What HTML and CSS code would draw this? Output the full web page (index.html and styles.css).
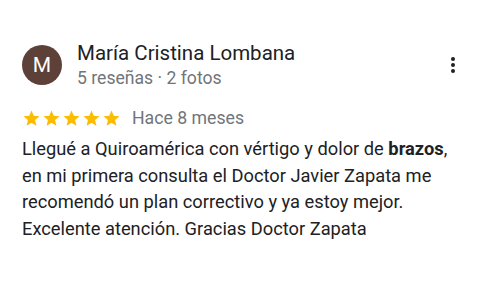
FILE: index.html
```html
<!DOCTYPE html>
<html lang="es">
<head>
    <meta charset="UTF-8">
    <meta name="viewport" content="width=device-width, initial-scale=1.0">
    <title>Reseña</title>
    <link rel="stylesheet" href="styles.css">
</head>
<body>
    <div class="review">
        <div class="header">
            <div class="avatar">M</div>
            <div class="author">
                <div class="name">María Cristina Lombana</div>
                <div class="meta">5 reseñas · 2 fotos</div>
            </div>
            <div class="more">
                <svg width="4" height="16" viewBox="0 0 4 16">
                    <circle cx="2" cy="2" r="2" fill="#202124"/>
                    <circle cx="2" cy="8" r="2" fill="#202124"/>
                    <circle cx="2" cy="14" r="2" fill="#202124"/>
                </svg>
            </div>
        </div>

        <div class="rating">
            <div class="stars">
                <svg class="star" viewBox="0 0 24 24"><path d="M12 17.27L18.18 21l-1.64-7.03L22 9.24l-7.19-.61L12 2 9.19 8.63 2 9.24l5.46 4.73L5.82 21z"/></svg>
                <svg class="star" viewBox="0 0 24 24"><path d="M12 17.27L18.18 21l-1.64-7.03L22 9.24l-7.19-.61L12 2 9.19 8.63 2 9.24l5.46 4.73L5.82 21z"/></svg>
                <svg class="star" viewBox="0 0 24 24"><path d="M12 17.27L18.18 21l-1.64-7.03L22 9.24l-7.19-.61L12 2 9.19 8.63 2 9.24l5.46 4.73L5.82 21z"/></svg>
                <svg class="star" viewBox="0 0 24 24"><path d="M12 17.27L18.18 21l-1.64-7.03L22 9.24l-7.19-.61L12 2 9.19 8.63 2 9.24l5.46 4.73L5.82 21z"/></svg>
                <svg class="star" viewBox="0 0 24 24"><path d="M12 17.27L18.18 21l-1.64-7.03L22 9.24l-7.19-.61L12 2 9.19 8.63 2 9.24l5.46 4.73L5.82 21z"/></svg>
            </div>
            <span class="date">Hace 8 meses</span>
        </div>

        <p class="text">Llegué a Quiroamérica con vértigo y dolor de <b>brazos</b>, en mi primera consulta el Doctor Javier Zapata me recomendó un plan correctivo y ya estoy mejor. Excelente atención. Gracias Doctor Zapata</p>
    </div>
</body>
</html>
```

FILE: styles.css
```css
body {
    margin: 0;
    background-color: #ffffff;
    font-family: Roboto, "Liberation Sans", sans-serif;
    color: #202124;
}
.review {
    padding: 40px 20px 0 22px;
}
.header {
    display: flex;
    align-items: center;
}
.avatar {
    width: 40px;
    height: 40px;
    border-radius: 50%;
    background-color: #5d4037;
    color: #ffffff;
    font-size: 21px;
    display: flex;
    align-items: center;
    justify-content: center;
    flex-shrink: 0;
}
.author {
    margin-left: 15px;
    flex: 1;
}
.name {
    font-size: 20.5px;
    line-height: 26px;
}
.meta {
    font-size: 17.6px;
    line-height: 24px;
    color: #70757a;
}
.more {
    display: flex;
    align-items: center;
    padding: 0 11px 0 0;
}
.rating {
    display: flex;
    align-items: center;
    margin-top: 19px;
}
.stars {
    display: flex;
    gap: 1px;
}
.star {
    width: 19px;
    height: 19px;
    fill: #fbbc04;
}
.date {
    margin-left: 11px;
    font-size: 17.7px;
    line-height: 19px;
    color: #70757a;
}
.text {
    margin: 8px 0 0 0;
    font-size: 18.3px;
    line-height: 26.5px;
}
.text b {
    font-weight: 700;
}
```
